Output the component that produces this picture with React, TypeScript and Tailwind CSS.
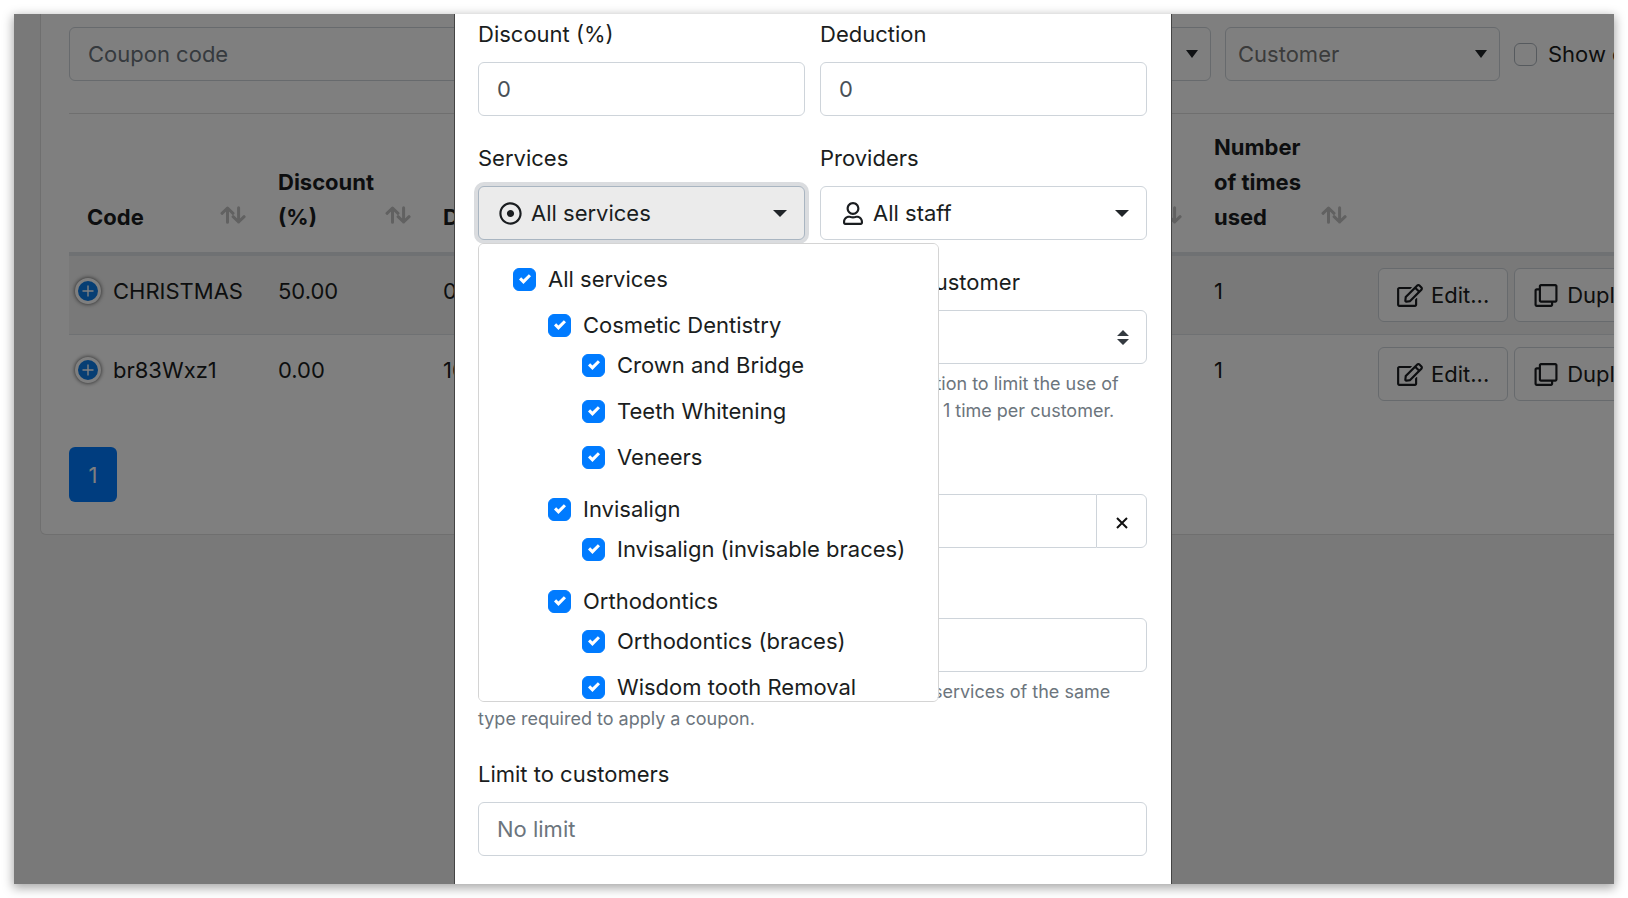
import React, { useEffect, useRef, useState } from "react";
import { FaRegClone, FaRegDotCircle, FaRegEdit, FaRegUser } from "react-icons/fa";

const labelClass = "mb-[10px] block h-[35px] leading-[35px]";
const inputClass =
  "block h-[54px] w-full rounded-md border border-[#ced4da] bg-white px-[18px] text-[#495057] outline-none placeholder:text-[#6c757d]";
const helpClass = "mt-[6px] text-[18px] leading-[27px] text-[#6c757d]";

function SortIcon() {
  return (
    <svg
      width="26"
      height="18"
      viewBox="0 0 26 18"
      fill="none"
      stroke="#c2c2c2"
      strokeWidth="3"
      strokeLinecap="round"
      strokeLinejoin="round"
      className="mb-[11px] shrink-0"
      aria-hidden="true"
    >
      <path d="M7.5 16.3V2M2 7.3L7.5 2L13 7.3" />
      <path d="M18.6 1.7V16M13.1 10.7L18.6 16L24.1 10.7" />
    </svg>
  );
}

function Caret({ small = false }: { small?: boolean }) {
  return small ? (
    <svg width="12" height="8" viewBox="0 0 12 8" fill="#212529" aria-hidden="true">
      <path d="M0 0H12L6 8Z" />
    </svg>
  ) : (
    <svg width="14" height="7" viewBox="0 0 14 7" fill="#212529" aria-hidden="true">
      <path d="M0 0H14L7 7Z" />
    </svg>
  );
}

function FilterSelect({ label }: { label: string }) {
  return (
    <div className="grid w-[275px] shrink-0 items-center">
      <select
        aria-label={label}
        className="col-start-1 row-start-1 h-[54px] w-full appearance-none rounded-md border border-[#ced4da] bg-white px-3 text-[#777]"
      >
        <option>{label}</option>
      </select>
      <span className="pointer-events-none col-start-1 row-start-1 mr-[13px] justify-self-end">
        <Caret small />
      </span>
    </div>
  );
}

function HeaderCell({ children, className = "" }: { children: React.ReactNode; className?: string }) {
  return (
    <th
      scope="col"
      className={`border-b-4 border-[#dee2e6] pt-4 pr-[14px] pb-[17px] pl-[18px] text-left align-bottom leading-[35px] font-bold ${className}`}
    >
      <div className="flex items-end justify-between">
        <span>{children}</span>
        <SortIcon />
      </div>
    </th>
  );
}

function ActionButton({ icon, children }: { icon: React.ReactNode; children: React.ReactNode }) {
  return (
    <button
      type="button"
      className="flex h-[54px] shrink-0 items-center gap-2 rounded-md border border-[#ced4da] bg-white px-[18px]"
    >
      {icon}
      {children}
    </button>
  );
}

const coupons = [
  { code: "CHRISTMAS", discount: "50.00", deduction: "0.00", used: 1 },
  { code: "br83Wxz1", discount: "0.00", deduction: "10.00", used: 1 },
];

function CouponsPage() {
  return (
    <div className="-mr-[145px] ml-[26px] rounded-b-md border border-t-0 border-[#dedede] bg-white px-7 pt-[13px] pb-8">
      <div className="flex items-center gap-[14px]">
        <input
          aria-label="Coupon code"
          placeholder="Coupon code"
          className="h-[54px] min-w-0 flex-1 rounded-md border border-[#ced4da] bg-white px-[18px] placeholder:text-[#6c757d]"
        />
        <FilterSelect label="Service" />
        <FilterSelect label="Customer" />
        <label className="flex w-[216px] shrink-0 items-center gap-[11px] whitespace-nowrap">
          <input
            type="checkbox"
            className="h-[23px] w-[23px] shrink-0 appearance-none rounded-[6px] border border-[#adb5bd] bg-white"
          />
          Show only active
        </label>
      </div>
      <hr className="mt-8 border-[#dfdfdf]" />
      <table className="w-full table-fixed border-separate border-spacing-0">
        <thead>
          <tr>
            <HeaderCell className="w-[191px]">Code</HeaderCell>
            <HeaderCell className="w-[165px]">Discount (%)</HeaderCell>
            <HeaderCell>Deduction</HeaderCell>
            <HeaderCell className="w-[165px]">Number of times used</HeaderCell>
            <th className="w-[369px] border-b-4 border-[#dee2e6]" />
          </tr>
        </thead>
        <tbody>
          {coupons.map((coupon, index) => (
            <tr
              key={coupon.code}
              className={
                index % 2 === 0
                  ? "bg-[#f2f2f2] align-top"
                  : "align-top [&>td]:border-t [&>td]:border-[#dee2e6]"
              }
            >
              <td className="pt-[18px] pl-[6px]">
                <div className="flex items-center gap-3">
                  <button
                    type="button"
                    aria-label={`Show details of ${coupon.code}`}
                    className="flex h-[26px] w-[26px] shrink-0 items-center justify-center rounded-full border-[3px] border-white bg-[#0d7de8] shadow-[0_0_4px_#444]"
                  >
                    <svg width="12" height="12" viewBox="0 0 12 12" stroke="#fff" strokeWidth="1.4" aria-hidden="true">
                      <path d="M6 0.5V11.5M0.5 6H11.5" />
                    </svg>
                  </button>
                  {coupon.code}
                </div>
              </td>
              <td className="pt-[18px] pl-[18px]">{coupon.discount}</td>
              <td className="pt-[18px] pl-[18px]">{coupon.deduction}</td>
              <td className="pt-[18px] pl-[18px]">{coupon.used}</td>
              <td className="py-3 pl-[17px]">
                <div className="flex gap-[6px]">
                  <ActionButton icon={<FaRegEdit className="h-[23px] w-[26px]" />}>Edit...</ActionButton>
                  <ActionButton icon={<FaRegClone className="h-[23px] w-[26px]" />}>Duplicate...</ActionButton>
                </div>
              </td>
            </tr>
          ))}
        </tbody>
      </table>
      <nav aria-label="Pages" className="mt-[34px] flex">
        <button type="button" className="h-[55px] w-12 rounded-md bg-[#007bff] text-white">
          1
        </button>
      </nav>
    </div>
  );
}

function CheckItem({ label, className }: { label: string; className: string }) {
  return (
    <label className={`flex items-center gap-3 whitespace-nowrap ${className}`}>
      <span className="grid shrink-0 place-items-center">
        <input
          type="checkbox"
          defaultChecked
          className="peer col-start-1 row-start-1 h-[23px] w-[23px] appearance-none rounded-[6px] border border-[#adb5bd] bg-white checked:border-[#007bff] checked:bg-[#007bff]"
        />
        <svg
          width="12"
          height="12"
          viewBox="0 0 8 8"
          fill="#fff"
          className="pointer-events-none invisible col-start-1 row-start-1 peer-checked:visible"
          aria-hidden="true"
        >
          <path d="M6.564.75l-3.59 3.612-1.538-1.55L0 4.26 2.974 7.25 8 2.193z" />
        </svg>
      </span>
      {label}
    </label>
  );
}

const categories = [
  { name: "Cosmetic Dentistry", services: ["Crown and Bridge", "Teeth Whitening", "Veneers"] },
  { name: "Invisalign", services: ["Invisalign (invisable braces)"] },
  { name: "Orthodontics", services: ["Orthodontics (braces)", "Wisdom tooth Removal"] },
];

function ServicesMenu() {
  return (
    <div className="absolute top-full left-0 z-10 mt-[3px] h-[459px] w-[461px] overflow-y-auto rounded-md border border-[#d4d4d4] bg-white pt-3 pl-[34px] [scrollbar-width:none]">
      <CheckItem label="All services" className="mb-[6px] h-[46px]" />
      <ul className="pl-[35px]">
        {categories.map((category) => (
          <li key={category.name} className="pb-3">
            <CheckItem label={category.name} className="h-[34px]" />
            <ul className="pl-[34px]">
              {category.services.map((service) => (
                <li key={service}>
                  <CheckItem label={service} className="h-[46px]" />
                </li>
              ))}
            </ul>
          </li>
        ))}
      </ul>
    </div>
  );
}

function DateField({ id, label }: { id: string; label: string }) {
  return (
    <div>
      <label htmlFor={id} className={labelClass}>
        {label}
      </label>
      <div className="flex">
        <input
          id={id}
          className="h-[54px] min-w-0 flex-1 rounded-l-md border border-r-0 border-[#ced4da] bg-white px-[18px]"
        />
        <button
          type="button"
          aria-label="Clear date"
          className="flex h-[54px] w-[51px] items-center justify-center rounded-r-md border border-[#ced4da] bg-white"
        >
          <svg width="12" height="12" viewBox="0 0 12 12" stroke="#111" strokeWidth="2" className="mt-1" aria-hidden="true">
            <path d="M1 1L11 11M11 1L1 11" />
          </svg>
        </button>
      </div>
    </div>
  );
}

function CouponDialog() {
  const [open, setOpen] = useState(true);
  const servicesButton = useRef<HTMLButtonElement>(null);
  useEffect(() => servicesButton.current?.focus({ preventScroll: true }), []);

  return (
    <div
      role="dialog"
      aria-modal="true"
      aria-label="Coupon"
      className="w-full max-w-[718px] border-x border-[#444] bg-white pt-[3px] pr-6 pl-[23px]"
    >
      <form className="grid grid-cols-2 gap-x-[15px] gap-y-[25px]">
        <div>
          <label htmlFor="discount" className={labelClass}>
            Discount (%)
          </label>
          <input id="discount" defaultValue="0" className={inputClass} />
        </div>
        <div>
          <label htmlFor="deduction" className={labelClass}>
            Deduction
          </label>
          <input id="deduction" defaultValue="0" className={inputClass} />
        </div>

        <div>
          <label htmlFor="services" className={labelClass}>
            Services
          </label>
          <div className="relative">
            <button
              id="services"
              ref={servicesButton}
              type="button"
              aria-expanded={open}
              onClick={() => setOpen(!open)}
              className="flex h-[54px] w-full items-center rounded-md border border-[#ced4da] bg-white pr-[17px] pl-5 outline-none focus:border-[#a9b5c1] focus:bg-[#ebebeb] focus:shadow-[0_0_0_4px_#dadcdf]"
            >
              <FaRegDotCircle className="mr-[9px] h-[23px] w-[23px]" />
              <span className="flex-1 text-left">All services</span>
              <Caret />
            </button>
            {open && <ServicesMenu />}
          </div>
        </div>
        <div>
          <label htmlFor="providers" className={labelClass}>
            Providers
          </label>
          <button
            id="providers"
            type="button"
            className="flex h-[54px] w-full items-center rounded-md border border-[#ced4da] bg-white pr-[17px] pl-[22px]"
          >
            <FaRegUser className="mr-[10px] h-[23px] w-[20px]" />
            <span className="flex-1 text-left">All staff</span>
            <Caret />
          </button>
        </div>

        <div>
          <label htmlFor="usage" className={labelClass}>
            Usage limit
          </label>
          <input id="usage" className={inputClass} />
        </div>
        <div>
          <label htmlFor="once" className={labelClass}>
            Once per customer
          </label>
          <div className="grid items-center">
            <select
              id="once"
              className="col-start-1 row-start-1 h-[54px] w-full appearance-none rounded-md border border-[#ced4da] bg-white px-[18px]"
            >
              <option></option>
            </select>
            <svg
              width="12"
              height="15"
              viewBox="0 0 4 5"
              fill="#343a40"
              className="pointer-events-none col-start-1 row-start-1 mr-[18px] justify-self-end"
              aria-hidden="true"
            >
              <path d="M2 0L0 2h4zm0 5L0 3h4z" />
            </svg>
          </div>
          <p className={helpClass}>
            Select this option to limit the use of
            <br />
            the coupon to 1 time per customer.
          </p>
        </div>

        <DateField id="date-from" label="Date from" />
        <DateField id="date-to" label="Date to" />

        <div className="col-span-2">
          <div className="grid grid-cols-2 gap-x-[15px]">
            <div>
              <label htmlFor="min" className={labelClass}>
                Min
              </label>
              <input id="min" className={inputClass} />
            </div>
            <div>
              <label htmlFor="max" className={labelClass}>
                Max
              </label>
              <input id="max" className={inputClass} />
            </div>
          </div>
          <p className={helpClass}>
            Specify minimum and maximum (optional) number of services of the same type required to apply a coupon.
          </p>
        </div>

        <div className="col-span-2">
          <label htmlFor="customers" className={labelClass}>
            Limit to customers
          </label>
          <input id="customers" placeholder="No limit" className={inputClass} />
        </div>
      </form>
    </div>
  );
}

export default function App() {
  return (
    <div className="flex h-screen bg-white p-[14px] font-['Inter','Noto_Sans',sans-serif] text-[22px] leading-[34px] text-[#1a1d20]">
      <main className="relative min-w-0 flex-1 overflow-hidden bg-[#f2f2f2] shadow-[0_3px_10px_1px_rgba(0,0,0,0.35)]">
        <CouponsPage />
        <div className="absolute inset-0 flex justify-center overflow-hidden bg-black/50 pr-[2px]">
          <CouponDialog />
        </div>
      </main>
    </div>
  );
}
